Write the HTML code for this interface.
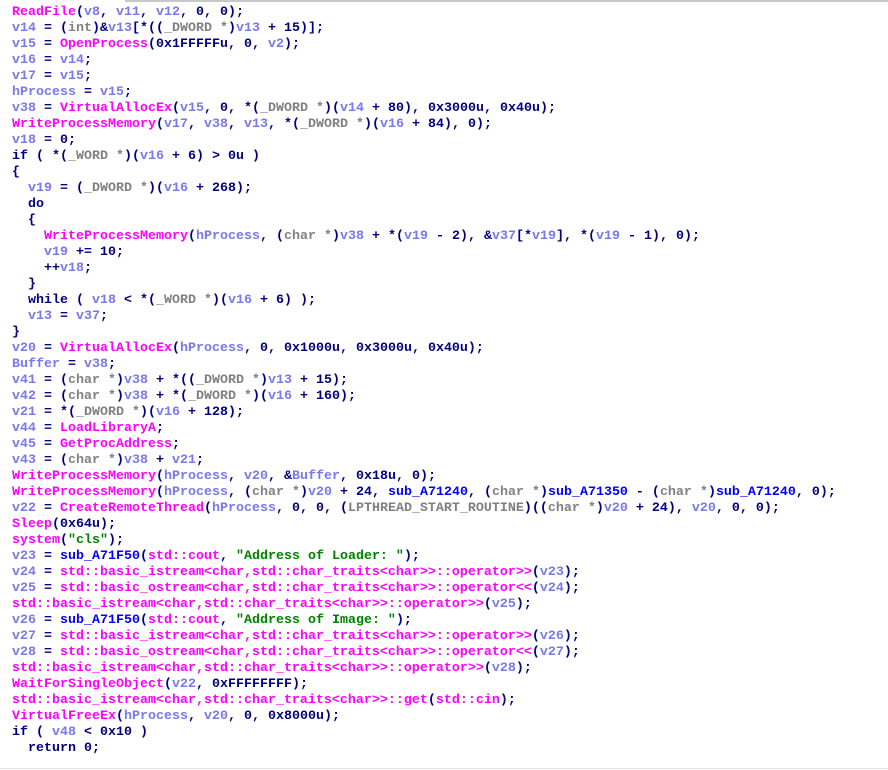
<!DOCTYPE html>
<html><head><meta charset="utf-8"><style>
html,body{margin:0;padding:0;background:#fff;width:888px;height:770px;overflow:hidden;position:relative}
pre{margin:0;position:absolute;left:12px;top:5px;font-family:"Liberation Mono",monospace;font-size:13.33px;font-weight:bold;line-height:16px;color:#000080}
.f{color:#ff00ff}.v{color:#7878f0}.t{color:#808080}.s{color:#0000ff}.g{color:#008000}
.top{position:absolute;top:0;left:125px;right:0;height:2px;background:#c8c8c8}
.bot{position:absolute;bottom:1px;left:0;right:0;height:1px;background:#e4e4e4}
</style></head><body>
<div class="top"></div><div class="bot"></div>
<pre><span class="f">ReadFile</span>(<span class="v">v8</span>, <span class="v">v11</span>, <span class="v">v12</span>, 0, 0);
<span class="v">v14</span> = (<span class="t">int</span>)&amp;<span class="v">v13</span>[*((<span class="t">_DWORD *</span>)<span class="v">v13</span> + 15)];
<span class="v">v15</span> = <span class="f">OpenProcess</span>(0x1FFFFFu, 0, <span class="v">v2</span>);
<span class="v">v16</span> = <span class="v">v14</span>;
<span class="v">v17</span> = <span class="v">v15</span>;
<span class="v">hProcess</span> = <span class="v">v15</span>;
<span class="v">v38</span> = <span class="f">VirtualAllocEx</span>(<span class="v">v15</span>, 0, *(<span class="t">_DWORD *</span>)(<span class="v">v14</span> + 80), 0x3000u, 0x40u);
<span class="f">WriteProcessMemory</span>(<span class="v">v17</span>, <span class="v">v38</span>, <span class="v">v13</span>, *(<span class="t">_DWORD *</span>)(<span class="v">v16</span> + 84), 0);
<span class="v">v18</span> = 0;
if ( *(<span class="t">_WORD *</span>)(<span class="v">v16</span> + 6) &gt; 0u )
{
  <span class="v">v19</span> = (<span class="t">_DWORD *</span>)(<span class="v">v16</span> + 268);
  do
  {
    <span class="f">WriteProcessMemory</span>(<span class="v">hProcess</span>, (<span class="t">char *</span>)<span class="v">v38</span> + *(<span class="v">v19</span> - 2), &amp;<span class="v">v37</span>[*<span class="v">v19</span>], *(<span class="v">v19</span> - 1), 0);
    <span class="v">v19</span> += 10;
    ++<span class="v">v18</span>;
  }
  while ( <span class="v">v18</span> &lt; *(<span class="t">_WORD *</span>)(<span class="v">v16</span> + 6) );
  <span class="v">v13</span> = <span class="v">v37</span>;
}
<span class="v">v20</span> = <span class="f">VirtualAllocEx</span>(<span class="v">hProcess</span>, 0, 0x1000u, 0x3000u, 0x40u);
<span class="v">Buffer</span> = <span class="v">v38</span>;
<span class="v">v41</span> = (<span class="t">char *</span>)<span class="v">v38</span> + *((<span class="t">_DWORD *</span>)<span class="v">v13</span> + 15);
<span class="v">v42</span> = (<span class="t">char *</span>)<span class="v">v38</span> + *(<span class="t">_DWORD *</span>)(<span class="v">v16</span> + 160);
<span class="v">v21</span> = *(<span class="t">_DWORD *</span>)(<span class="v">v16</span> + 128);
<span class="v">v44</span> = <span class="f">LoadLibraryA</span>;
<span class="v">v45</span> = <span class="f">GetProcAddress</span>;
<span class="v">v43</span> = (<span class="t">char *</span>)<span class="v">v38</span> + <span class="v">v21</span>;
<span class="f">WriteProcessMemory</span>(<span class="v">hProcess</span>, <span class="v">v20</span>, &amp;<span class="v">Buffer</span>, 0x18u, 0);
<span class="f">WriteProcessMemory</span>(<span class="v">hProcess</span>, (<span class="t">char *</span>)<span class="v">v20</span> + 24, <span class="s">sub_A71240</span>, (<span class="t">char *</span>)<span class="s">sub_A71350</span> - (<span class="t">char *</span>)<span class="s">sub_A71240</span>, 0);
<span class="v">v22</span> = <span class="f">CreateRemoteThread</span>(<span class="v">hProcess</span>, 0, 0, (<span class="t">LPTHREAD_START_ROUTINE</span>)((<span class="t">char *</span>)<span class="v">v20</span> + 24), <span class="v">v20</span>, 0, 0);
<span class="f">Sleep</span>(0x64u);
<span class="f">system</span>(<span class="g">"cls"</span>);
<span class="v">v23</span> = <span class="s">sub_A71F50</span>(<span class="f">std::cout</span>, <span class="g">"Address of Loader: "</span>);
<span class="v">v24</span> = <span class="f">std::basic_istream&lt;char,std::char_traits&lt;char&gt;&gt;::operator&gt;&gt;</span>(<span class="v">v23</span>);
<span class="v">v25</span> = <span class="f">std::basic_ostream&lt;char,std::char_traits&lt;char&gt;&gt;::operator&lt;&lt;</span>(<span class="v">v24</span>);
<span class="f">std::basic_istream&lt;char,std::char_traits&lt;char&gt;&gt;::operator&gt;&gt;</span>(<span class="v">v25</span>);
<span class="v">v26</span> = <span class="s">sub_A71F50</span>(<span class="f">std::cout</span>, <span class="g">"Address of Image: "</span>);
<span class="v">v27</span> = <span class="f">std::basic_istream&lt;char,std::char_traits&lt;char&gt;&gt;::operator&gt;&gt;</span>(<span class="v">v26</span>);
<span class="v">v28</span> = <span class="f">std::basic_ostream&lt;char,std::char_traits&lt;char&gt;&gt;::operator&lt;&lt;</span>(<span class="v">v27</span>);
<span class="f">std::basic_istream&lt;char,std::char_traits&lt;char&gt;&gt;::operator&gt;&gt;</span>(<span class="v">v28</span>);
<span class="f">WaitForSingleObject</span>(<span class="v">v22</span>, 0xFFFFFFFF);
<span class="f">std::basic_istream&lt;char,std::char_traits&lt;char&gt;&gt;::get</span>(<span class="f">std::cin</span>);
<span class="f">VirtualFreeEx</span>(<span class="v">hProcess</span>, <span class="v">v20</span>, 0, 0x8000u);
if ( <span class="v">v48</span> &lt; 0x10 )
  return 0;</pre>
</body></html>
